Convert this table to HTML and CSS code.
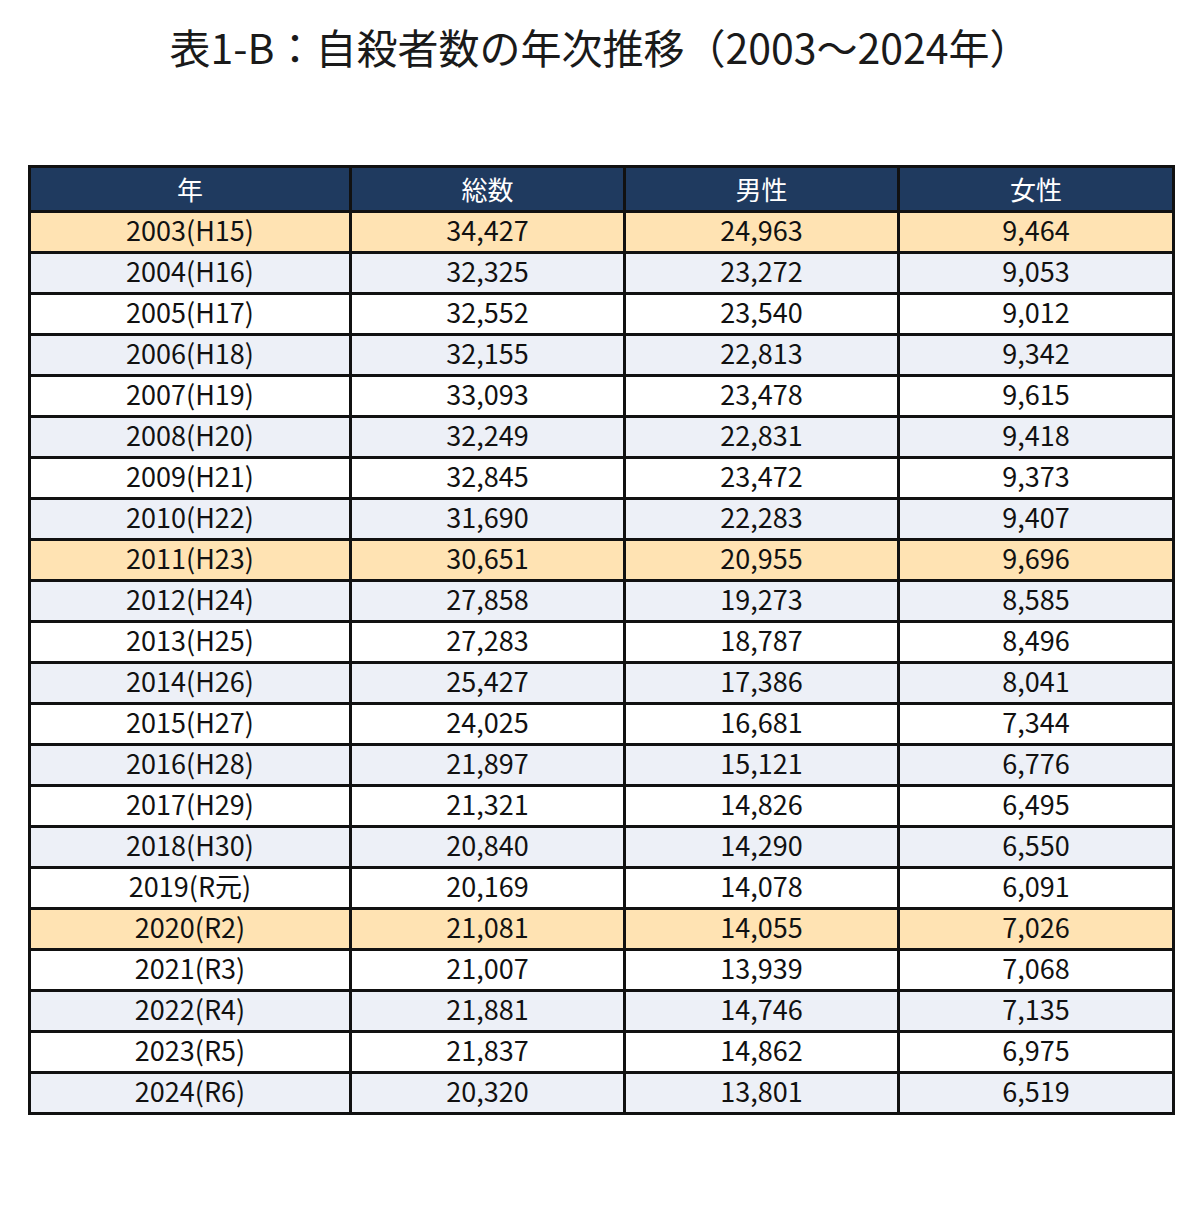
FILE: index.html
```html
<!DOCTYPE html>
<html lang="ja">
<head>
<meta charset="utf-8">
<title>表1-B：自殺者数の年次推移（2003〜2024年）</title>
<link rel="stylesheet" href="styles.css">
</head>
<body>
<h1 class="title">表1-B：自殺者数の年次推移（2003〜2024年）</h1>
<table class="data">
  <colgroup>
    <col class="c-year"><col class="c-num"><col class="c-num"><col class="c-last">
  </colgroup>
  <thead>
    <tr><th>年</th><th>総数</th><th>男性</th><th>女性</th></tr>
  </thead>
  <tbody>
    <tr class="hl"><td>2003(H15)</td><td>34,427</td><td>24,963</td><td>9,464</td></tr>
    <tr><td>2004(H16)</td><td>32,325</td><td>23,272</td><td>9,053</td></tr>
    <tr><td>2005(H17)</td><td>32,552</td><td>23,540</td><td>9,012</td></tr>
    <tr><td>2006(H18)</td><td>32,155</td><td>22,813</td><td>9,342</td></tr>
    <tr><td>2007(H19)</td><td>33,093</td><td>23,478</td><td>9,615</td></tr>
    <tr><td>2008(H20)</td><td>32,249</td><td>22,831</td><td>9,418</td></tr>
    <tr><td>2009(H21)</td><td>32,845</td><td>23,472</td><td>9,373</td></tr>
    <tr><td>2010(H22)</td><td>31,690</td><td>22,283</td><td>9,407</td></tr>
    <tr class="hl"><td>2011(H23)</td><td>30,651</td><td>20,955</td><td>9,696</td></tr>
    <tr><td>2012(H24)</td><td>27,858</td><td>19,273</td><td>8,585</td></tr>
    <tr><td>2013(H25)</td><td>27,283</td><td>18,787</td><td>8,496</td></tr>
    <tr><td>2014(H26)</td><td>25,427</td><td>17,386</td><td>8,041</td></tr>
    <tr><td>2015(H27)</td><td>24,025</td><td>16,681</td><td>7,344</td></tr>
    <tr><td>2016(H28)</td><td>21,897</td><td>15,121</td><td>6,776</td></tr>
    <tr><td>2017(H29)</td><td>21,321</td><td>14,826</td><td>6,495</td></tr>
    <tr><td>2018(H30)</td><td>20,840</td><td>14,290</td><td>6,550</td></tr>
    <tr><td>2019(R元)</td><td>20,169</td><td>14,078</td><td>6,091</td></tr>
    <tr class="hl"><td>2020(R2)</td><td>21,081</td><td>14,055</td><td>7,026</td></tr>
    <tr><td>2021(R3)</td><td>21,007</td><td>13,939</td><td>7,068</td></tr>
    <tr><td>2022(R4)</td><td>21,881</td><td>14,746</td><td>7,135</td></tr>
    <tr><td>2023(R5)</td><td>21,837</td><td>14,862</td><td>6,975</td></tr>
    <tr><td>2024(R6)</td><td>20,320</td><td>13,801</td><td>6,519</td></tr>
  </tbody>
</table>
</body>
</html>
```

FILE: styles.css
```css
html, body {
  margin: 0;
  padding: 0;
  background: #ffffff;
}

body {
  font-family: "Noto Sans CJK JP", "Noto Sans", sans-serif;
  color: #111111;
}

.title {
  margin: 0;
  padding-top: 21px;
  height: 165px;
  box-sizing: border-box;
  font-size: 41px;
  line-height: 50px;
  font-weight: 400;
  text-align: center;
  color: #1a1a1a;
}

.data {
  margin-left: 28px;
  width: 1144px;
  border-collapse: collapse;
  table-layout: fixed;
}

.c-year { width: 321px; }
.c-num { width: 274px; }
.c-last { width: 275px; }

.data th,
.data td {
  border: 3px solid #111111;
  padding: 0;
  text-align: center;
  font-weight: 400;
}

.data th {
  background: #1f3a5f;
  color: #ffffff;
  font-size: 26px;
  line-height: 42px;
  height: 42px;
}

.data td {
  font-size: 27px;
  line-height: 34px;
  height: 34px;
  padding-bottom: 4px;
}

.data tbody tr:nth-child(even) td {
  background: #edf0f7;
}

.data tbody tr.hl td {
  background: #ffe3b3;
}
```
